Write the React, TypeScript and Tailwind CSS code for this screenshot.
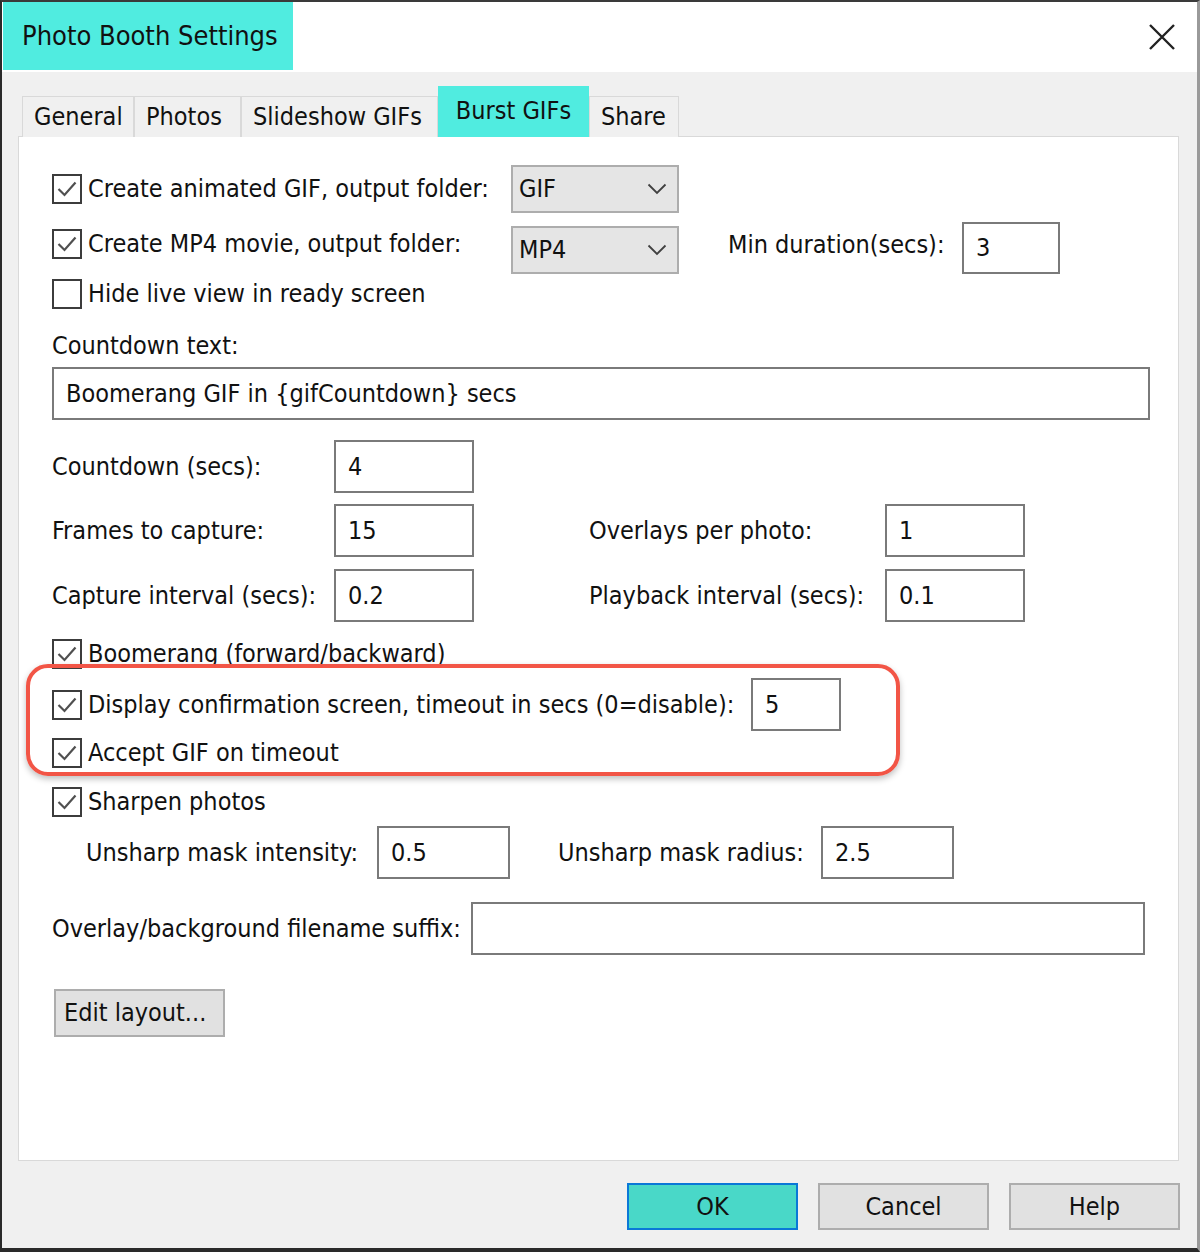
import React from 'react'

const font = "font-['DejaVu_Sans_Condensed','DejaVu_Sans',sans-serif]"

function Check({ checked }: { checked?: boolean }) {
  return (
    <span className="flex h-[30px] w-[30px] shrink-0 items-center justify-center border-[2.5px] border-[#3c3c3c] bg-white">
      {checked && (
        <svg width="24" height="24" viewBox="0 0 24 24">
          <path d="M3.5 12 L9.5 18 L20.5 5.5" fill="none" stroke="#505050" strokeWidth="2.2" />
        </svg>
      )}
    </span>
  )
}

function CheckLabel({ label, checked, className = '' }: { label: string; checked?: boolean; className?: string }) {
  return (
    <div className={`flex h-[30px] items-center gap-[6px] ${className}`}>
      <Check checked={checked} />
      <span className="whitespace-nowrap leading-[30px]">{label}</span>
    </div>
  )
}

function Field({ value = '', className = '' }: { value?: string; className?: string }) {
  return (
    <div className={`flex shrink-0 items-center border-2 border-[#7a7a7a] bg-white pl-[12px] ${className}`}>
      <span className="whitespace-nowrap">{value}</span>
    </div>
  )
}

function Select({ value, className = '' }: { value: string; className?: string }) {
  return (
    <div className={`flex h-[48px] w-[168px] shrink-0 items-center justify-between border-2 border-[#adadad] bg-[#e5e5e5] pl-[6px] pr-[10px] ${className}`}>
      <span>{value}</span>
      <svg width="20" height="12" viewBox="0 0 20 12">
        <path d="M1.5 1.5 L10 10 L18.5 1.5" fill="none" stroke="#404040" strokeWidth="1.8" />
      </svg>
    </div>
  )
}

function Btn({ label, primary }: { label: string; primary?: boolean }) {
  return (
    <button
      className={`flex h-[47px] w-[171px] items-center justify-center border-2 ${
        primary ? 'border-[#0a78d7] bg-[#49d8c8]' : 'border-[#adadad] bg-[#e1e1e1]'
      }`}
    >
      {label}
    </button>
  )
}

const tabs = [
  { name: 'General', w: 'w-[112px]' },
  { name: 'Photos', w: 'w-[107px]' },
  { name: 'Slideshow GIFs', w: 'w-[197px]' },
  { name: 'Burst GIFs', w: 'w-[151px]', active: true },
  { name: 'Share', w: 'w-[90px]' },
]

export default function App() {
  return (
    <div className={`relative h-[1252px] w-[1200px] overflow-hidden border-b-4 border-l-2 border-r-[3px] border-t-2 border-b-[#2a2a2a] border-l-[#2a2a2a] border-r-[#9a9a9a] border-t-[#3a3a3a] bg-[#f0f0f0] text-[25px] text-[#111] ${font}`}>
      {/* title bar */}
      <div className="flex h-[70px] items-center bg-white">
        <div className="ml-px flex h-[68px] w-[290px] items-center self-start bg-[#50ece0] pl-[19px] text-[27px]">
          Photo Booth Settings
        </div>
        <svg className="ml-auto mr-[21px]" width="28" height="28" viewBox="0 0 28 28">
          <path d="M2 2 L26 26 M26 2 L2 26" stroke="#222" strokeWidth="2.4" />
        </svg>
      </div>

      {/* body */}
      <div className="pl-[16px]">
        <div className="relative z-10 mt-[14px] flex h-[51px] items-end pl-[4px]">
          {tabs.map((t) =>
            t.active ? (
              <div key={t.name} className={`flex h-[51px] items-center justify-center bg-[#50ece0] pb-[2px] ${t.w}`}>
                {t.name}
              </div>
            ) : (
              <div
                key={t.name}
                className={`flex h-[41px] items-center border-x border-t border-[#d9d9d9] bg-[#f0f0f0] pl-[11px] ${t.w}`}
              >
                {t.name}
              </div>
            ),
          )}
        </div>

        <div className="-mt-px flex h-[1025px] w-[1161px] flex-col border border-[#d9d9d9] bg-white pl-[33px]">
          <div className="mt-[28px] flex h-[48px] items-center">
            <CheckLabel checked label="Create animated GIF, output folder:" className="w-[459px]" />
            <Select value="GIF" />
          </div>

          <div className="mt-[9px] flex h-[52px] items-start">
            <CheckLabel checked label="Create MP4 movie, output folder:" className="mt-[7px] w-[459px]" />
            <Select value="MP4" className="mt-[4px]" />
            <span className="ml-[49px] mt-[8px] w-[234px] whitespace-nowrap leading-[30px]">Min duration(secs):</span>
            <Field value="3" className="h-[52px] w-[98px]" />
          </div>

          <CheckLabel label="Hide live view in ready screen" className="mt-[5px]" />

          <span className="mt-[22px] leading-[30px]">Countdown text:</span>
          <Field value="Boomerang GIF in {gifCountdown} secs" className="mt-[6px] h-[53px] w-[1098px]" />

          <div className="mt-[20px] flex h-[53px] items-center">
            <span className="w-[282px] whitespace-nowrap">Countdown (secs):</span>
            <Field value="4" className="h-[53px] w-[140px]" />
          </div>

          <div className="mt-[11px] flex h-[53px] items-center">
            <span className="w-[282px] whitespace-nowrap">Frames to capture:</span>
            <Field value="15" className="h-[53px] w-[140px]" />
            <span className="ml-[115px] w-[296px] whitespace-nowrap">Overlays per photo:</span>
            <Field value="1" className="h-[53px] w-[140px]" />
          </div>

          <div className="mt-[12px] flex h-[53px] items-center">
            <span className="w-[282px] whitespace-nowrap">Capture interval (secs):</span>
            <Field value="0.2" className="h-[53px] w-[140px]" />
            <span className="ml-[115px] w-[296px] whitespace-nowrap">Playback interval (secs):</span>
            <Field value="0.1" className="h-[53px] w-[140px]" />
          </div>

          <CheckLabel checked label="Boomerang (forward/backward)" className="mt-[17px]" />

          <div className="mt-[9px] flex h-[53px] items-center">
            <CheckLabel checked label="Display confirmation screen, timeout in secs (0=disable):" className="w-[699px]" />
            <Field value="5" className="h-[53px] w-[90px]" />
          </div>

          <CheckLabel checked label="Accept GIF on timeout" className="mt-[7px]" />

          <CheckLabel checked label="Sharpen photos" className="mt-[19px]" />

          <div className="mt-[9px] flex h-[53px] items-center pl-[34px]">
            <span className="w-[291px] whitespace-nowrap">Unsharp mask intensity:</span>
            <Field value="0.5" className="h-[53px] w-[133px]" />
            <span className="ml-[48px] w-[263px] whitespace-nowrap">Unsharp mask radius:</span>
            <Field value="2.5" className="h-[53px] w-[133px]" />
          </div>

          <div className="mt-[23px] flex h-[53px] items-center">
            <span className="w-[419px] whitespace-nowrap">Overlay/background filename suffix:</span>
            <Field className="h-[53px] w-[674px]" />
          </div>

          <button className="ml-[2px] mt-[34px] flex h-[48px] w-[171px] items-center border-2 border-[#adadad] bg-[#e1e1e1] pl-[8px]">
            Edit layout...
          </button>
        </div>

        <div className="mt-[22px] flex justify-end gap-[20px] pr-[17px]">
          <Btn label="OK" primary />
          <Btn label="Cancel" />
          <Btn label="Help" />
        </div>
      </div>

      {/* highlight annotation */}
      <div className="absolute left-[24px] top-[662px] h-[112px] w-[874px] rounded-[22px] border-4 border-[#f25546] shadow-[0_3px_6px_rgba(0,0,0,0.25)]" />
    </div>
  )
}
